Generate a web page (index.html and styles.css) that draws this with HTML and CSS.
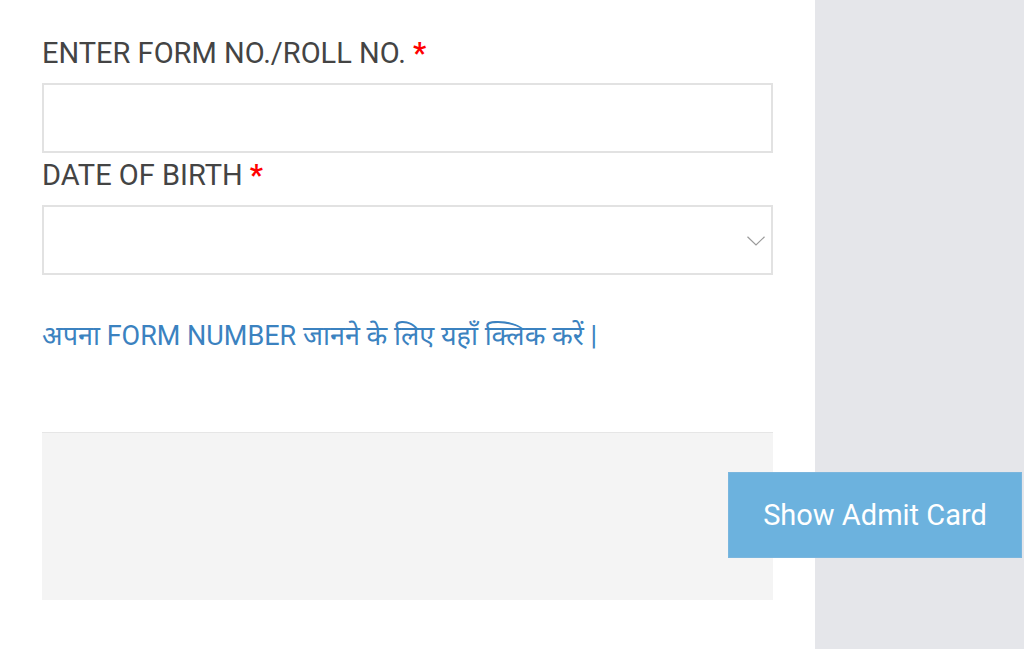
FILE: index.html
```html
<!DOCTYPE html>
<html>
<head>
<meta charset="utf-8">
<link rel="stylesheet" href="styles.css">
</head>
<body>
<div class="page">
  <div class="main">
    <label class="label">ENTER FORM NO./ROLL NO. <span class="req">*</span></label>
    <div class="field"></div>
    <label class="label">DATE OF BIRTH <span class="req">*</span></label>
    <div class="field select">
      <svg class="chev" width="18" height="10" viewBox="0 0 18 10"><path d="M0.5 0.8 L9 9 L17.5 0.8" fill="none" stroke="#9a9a9a" stroke-width="1.2"/></svg>
    </div>
    <a class="link">अपना FORM NUMBER जानने के लिए यहाँ क्लिक करें |</a>
    <div class="captcha"></div>
  </div>
  <div class="side"></div>
  <button class="btn">Show Admit Card</button>
</div>
</body>
</html>
```
FILE: styles.css
```css
html, body { margin: 0; padding: 0; }
body { font-family: Roboto, "Noto Sans", sans-serif; background: #fff; }
.page { display: flex; height: 649px; position: relative; overflow: hidden; }
.main { flex: 0 0 815px; box-sizing: border-box; padding: 36px 42px 0 42px; display: flex; flex-direction: column; background: #fff; }
.side { flex: 1; background: #e5e6ea; }
.label { font-size: 29px; color: #444; line-height: 34px; margin-bottom: 13px; }
.req { color: #f00; font-weight: bold; }
.field { height: 70px; border: 2px solid #e2e2e2; box-sizing: border-box; background: #fff; margin-bottom: 5px; position: relative; }
.select .chev { position: absolute; right: 6px; top: 29px; }
.link { color: #3b82c0; font-size: 27px; margin-top: 40px; line-height: 32px; }
.captcha { margin-top: 80px; height: 168px; background: #f4f4f4; border-top: 1px solid #e6e6e6; box-sizing: border-box; }
.btn { position: absolute; left: 728px; top: 472px; width: 294px; height: 86px; background: #6cb2de; border: 1px solid #7ab6de; color: #fff; font-family: Roboto, sans-serif; font-size: 29px; padding: 0; }
```
